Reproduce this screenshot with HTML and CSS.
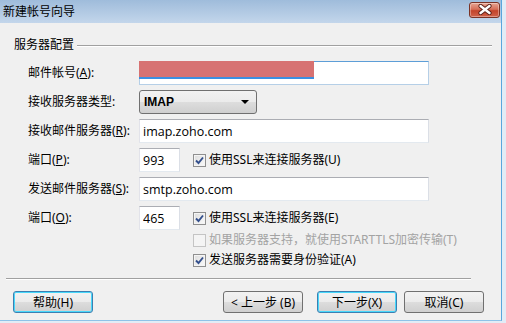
FILE: index.html
```html
<!DOCTYPE html>
<html lang="zh-CN">
<head>
  <meta charset="UTF-8">
  <title>新建帐号向导</title>
  <link rel="stylesheet" href="styles.css">
</head>
<body>
  <div class="window">
    <header class="titlebar">
      <span class="titlebar__text">新建帐号向导</span>
      <button class="close" type="button" aria-label="关闭">
        <svg width="16" height="11" viewBox="0 0 16 11">
          <path d="M3.5 2 L12.5 9 M12.5 2 L3.5 9" stroke="#5a2018" stroke-width="4.2" stroke-linecap="round"/>
          <path d="M3.5 2 L12.5 9 M12.5 2 L3.5 9" stroke="#fff" stroke-width="2.4" stroke-linecap="round"/>
        </svg>
      </button>
    </header>

    <main class="wizard">
      <div class="group">
        <span class="group__title">服务器配置</span>
        <span class="group__line"></span>
      </div>

      <div class="fields">
        <div class="row">
          <label class="row__label">邮件帐号(<u>A</u>):</label>
          <div class="box box--wide box--focus">
            <span class="redact"></span>
          </div>
        </div>
        <div class="row">
          <label class="row__label">接收服务器类型:</label>
          <div class="select">
            <span>IMAP</span>
            <span class="select__arrow"></span>
          </div>
        </div>
        <div class="row">
          <label class="row__label">接收邮件服务器(<u>R</u>):</label>
          <input class="box box--wide" type="text" value="imap.zoho.com" readonly>
        </div>
        <div class="row">
          <label class="row__label">端口(<u>P</u>):</label>
          <input class="box box--port" type="text" value="993" readonly>
          <span class="check check--on"></span>
          <span class="check__text">使用SSL来连接服务器(U)</span>
        </div>
        <div class="row">
          <label class="row__label">发送邮件服务器(<u>S</u>):</label>
          <input class="box box--wide" type="text" value="smtp.zoho.com" readonly>
        </div>
        <div class="row">
          <label class="row__label">端口(<u>O</u>):</label>
          <input class="box box--port" type="text" value="465" readonly>
          <span class="check check--on"></span>
          <span class="check__text">使用SSL来连接服务器(E)</span>
        </div>
        <div class="row row--check">
          <span class="check check--off"></span>
          <span class="check__text check__text--off">如果服务器支持，就使用STARTTLS加密传输(T)</span>
        </div>
        <div class="row row--check">
          <span class="check check--on"></span>
          <span class="check__text">发送服务器需要身份验证(A)</span>
        </div>
      </div>
    </main>

    <div class="sep"></div>

    <footer class="buttons">
      <button class="btn btn--default" type="button">帮助(H)</button>
      <span class="buttons__space"></span>
      <button class="btn" type="button">&lt; 上一步 (B)</button>
      <button class="btn btn--default btn--next" type="button">下一步(X)</button>
      <button class="btn btn--cancel" type="button">取消(C)</button>
    </footer>
  </div>
</body>
</html>
```

FILE: styles.css
```css
*,
*::before,
*::after {
  box-sizing: border-box;
}
html{
  background: #e2ecf6;
}
body{
  margin: 0;
  padding: 0;
  font-family: "Noto Sans", "Noto Sans CJK SC", sans-serif;
  font-size: 12px;
  line-height: 16px;
  color: #000;
}
.window{
  width: 502px;
  height: 321px;
  background: #f0f0f0;
  border-right: 1px solid #5aa6dd;
  border-bottom: 1px solid #8ec2e8;
}
.titlebar{
  height: 23px;
  display: flex;
  align-items: center;
  justify-content: space-between;
  padding: 0 1px 0 3px;
  background: linear-gradient(#9fbcdb, #c3d6eb);
}
.titlebar__text{
  font-size: 12px;
}
.close{
  width: 31px;
  height: 16px;
  margin-top: -4px;
  padding: 0;
  display: flex;
  align-items: center;
  justify-content: center;
  border: 1px solid #7a3326;
  border-radius: 3px;
  background: linear-gradient(#e7a593 0%, #d66f58 45%, #c3432a 55%, #d0624a 100%);
  box-shadow: inset 0 0 0 1px rgba(255, 255, 255, 0.35);
}

.wizard{
  padding-top: 14px;
}
.group{
  display: flex;
  align-items: center;
  padding-left: 14px;
  padding-right: 9px;
}
.group__title{
  margin-right: 3px;
}
.group__line{
  flex: 1;
  height: 2px;
  border-top: 1px solid #a0a0a0;
  border-bottom: 1px solid #fff;
  margin-top: 1px;
}

.fields{
  padding-left: 28px;
  margin-top: 8px;
}
.row{
  display: flex;
  align-items: center;
  height: 24px;
}
.row + .row{
  margin-top: 5px;
}
.row--check{
  height: 20px;
  padding-left: 165px;
}
.row + .row--check{
  margin-top: 0;
}
.row__label{
  width: 111px;
  flex: none;
}

.box{
  height: 24px;
  margin: 0;
  padding: 0 3px;
  border: 1px solid #abadb3;
  border-color: #abadb3 #dbdfe6 #e3e9ef #e2e3ea;
  background: #fff;
  font-family: "Open Sans", "Noto Sans CJK SC", sans-serif;
  font-size: 12.5px;
  color: #000;
  outline: none;
}
.box--wide{
  width: 290px;
}
.box--port{
  width: 41px;
}
.box--focus{
  position: relative;
  border-color: #5d9ed7 #b5cfe7 #b5cfe7 #b5cfe7;
}
.redact{
  position: absolute;
  left: -1px;
  top: -1px;
  width: 175px;
  height: 18px;
  background: #d77272;
  border-bottom: 2px solid #3d8fe0;
}

.select{
  width: 118px;
  height: 24px;
  display: flex;
  align-items: center;
  justify-content: space-between;
  padding: 0 7px 0 4px;
  border: 1px solid #707070;
  border-radius: 3px;
  background: linear-gradient(#f2f2f2 0%, #ebebeb 50%, #dddddd 51%, #cfcfcf 100%);
  font-family: "Liberation Sans", sans-serif;
  font-weight: bold;
  font-size: 12px;
}
.select__arrow{
  width: 0;
  height: 0;
  border-left: 4px solid transparent;
  border-right: 4px solid transparent;
  border-top: 4px solid #000;
}

.check{
  width: 13px;
  height: 13px;
  flex: none;
  margin-left: 13px;
  margin-right: 3px;
  border: 1px solid #8f8f8f;
  background: linear-gradient(135deg, #dcdcdc, #fbfbfb);
  box-shadow: inset 0 0 0 1px #f4f4f4;
}
.row--check .check{
  margin-left: 0;
}
.check--on{
  background: url("data:image/svg+xml;utf8,<svg xmlns='http://www.w3.org/2000/svg' width='11' height='11' viewBox='0 0 11 11'><path d='M2 5.5 L4.5 8 L9 2.5' fill='none' stroke='%23334f8c' stroke-width='1.9'/></svg>") center no-repeat, linear-gradient(135deg, #dcdcdc, #fbfbfb);
}
.check--off{
  border-color: #c4c4c4;
  background: #f4f4f4;
  box-shadow: none;
}
.check__text--off{
  color: #a3a3a3;
}

.sep{
  margin: 8px 0 0 6px;
  width: 465px;
  height: 2px;
  border-top: 1px solid #a0a0a0;
  border-bottom: 1px solid #fff;
}

.buttons{
  display: flex;
  padding-left: 13px;
  margin-top: 11px;
}
.buttons__space{
  width: 130px;
}
.btn{
  width: 80px;
  height: 22px;
  padding: 0;
  border: 1px solid #707070;
  border-radius: 3px;
  background: linear-gradient(#f2f2f2 0%, #ebebeb 50%, #dddddd 51%, #cfcfcf 100%);
  font-family: "Noto Sans", "Noto Sans CJK SC", sans-serif;
  font-size: 12px;
  color: #000;
}
.btn--default{
  border-color: #3c7fb1;
  box-shadow: inset 0 0 0 1px #48d8fb;
}
.btn--next{
  margin-left: 14px;
}
.btn--cancel{
  margin-left: 7px;
}
```
